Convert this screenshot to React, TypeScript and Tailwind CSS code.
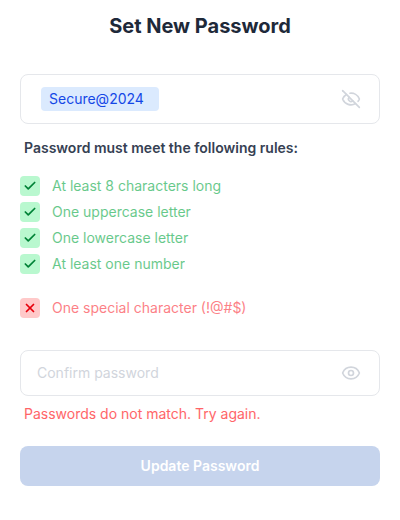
import { Eye, EyeOff, Check, X } from "lucide-react";

const rules = [
  { label: "At least 8 characters long", ok: true },
  { label: "One uppercase letter", ok: true },
  { label: "One lowercase letter", ok: true },
  { label: "At least one number", ok: true },
  { label: "One special character (!@#$)", ok: false },
];

export default function App() {
  return (
    <div
      className="w-[400px] h-[520px] bg-white px-5 pt-[12px]"
      style={{ fontFamily: '"Inter", "Liberation Sans", sans-serif' }}
    >
      <h1 className="text-center text-xl font-bold text-gray-800 leading-7">Set New Password</h1>

      {/* Password field */}
      <div className="mt-[34px] h-[50px] rounded-lg border border-gray-200 flex items-center justify-between pl-5 pr-3">
        <span className="bg-blue-100 text-blue-700 text-sm px-2 py-0.5 rounded w-[118px]">Secure@2024</span>
        <button className="w-8 h-8 flex items-center justify-center text-gray-300">
          <EyeOff className="w-5 h-5" />
        </button>
      </div>

      <p className="mt-[14px] text-sm font-semibold text-gray-700 px-1">Password must meet the following rules:</p>

      <ul className="mt-[18px] flex flex-col gap-[6px]">
        {rules.map((r) => (
          <li
            key={r.label}
            className={`flex items-center gap-3 text-sm leading-5 ${r.ok ? "text-green-600" : "text-red-500 mt-[18px]"}`}
          >
            <span
              className={`w-5 h-5 rounded flex items-center justify-center ${r.ok ? "bg-green-200 text-green-700" : "bg-red-200 text-red-600"}`}
            >
              {r.ok ? <Check className="w-3.5 h-3.5" strokeWidth={3} /> : <X className="w-3.5 h-3.5" strokeWidth={3} />}
            </span>
            <span className="opacity-60">{r.label}</span>
          </li>
        ))}
      </ul>

      {/* Confirm field */}
      <div className="mt-[32px] h-[46px] rounded-lg border border-gray-200 flex items-center justify-between pl-4 pr-3">
        <span className="text-sm text-gray-300">Confirm password</span>
        <button className="w-8 h-8 flex items-center justify-center text-gray-300">
          <Eye className="w-5 h-5" />
        </button>
      </div>

      <p className="mt-[8px] text-sm text-red-400 px-1">Passwords do not match. Try again.</p>

      <button className="mt-[22px] w-full h-10 rounded-lg bg-[#c6d4ed] text-white text-sm font-semibold">
        Update Password
      </button>
    </div>
  );
}
